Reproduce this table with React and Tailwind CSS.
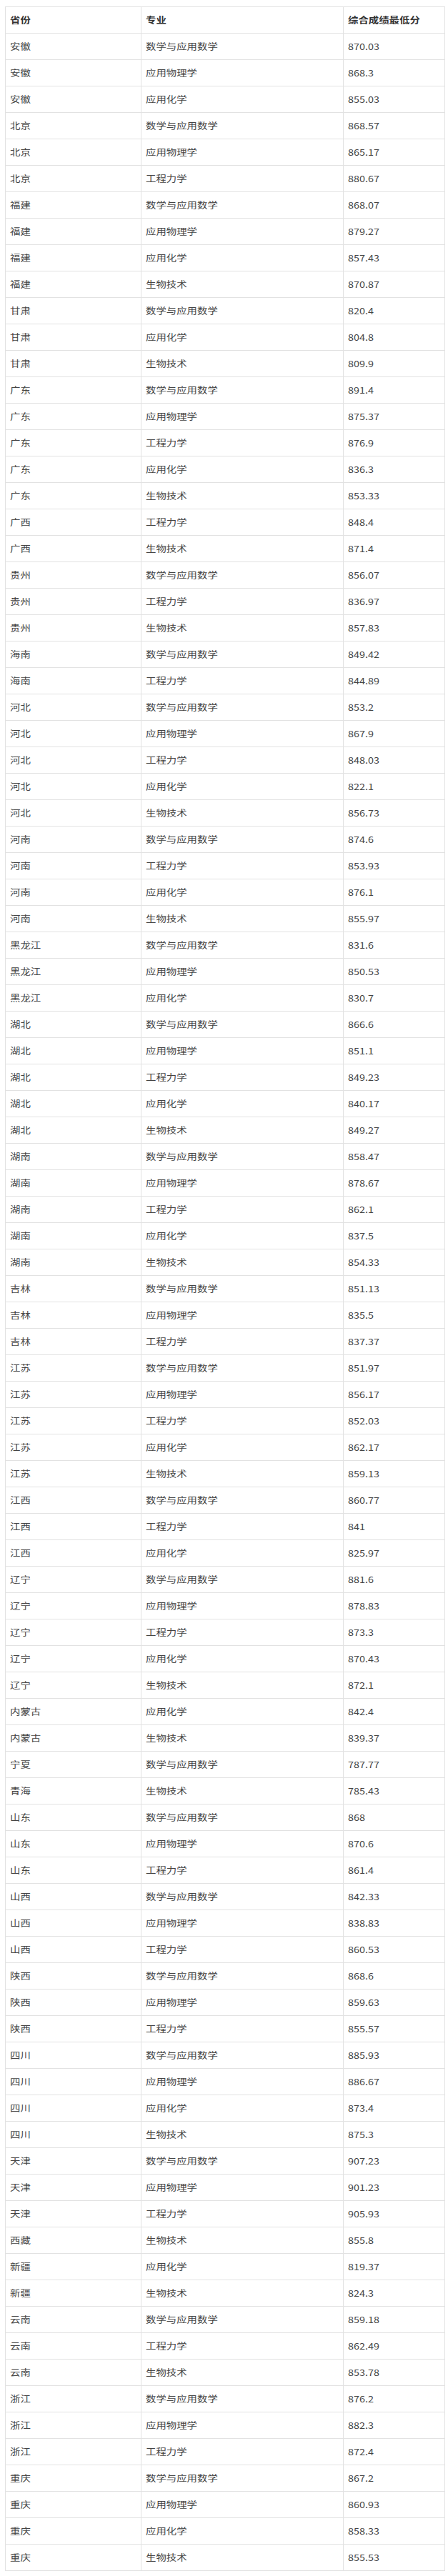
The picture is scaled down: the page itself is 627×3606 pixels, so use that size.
import React from "react";

const raw = `安徽|数学与应用数学|870.03
安徽|应用物理学|868.3
安徽|应用化学|855.03
北京|数学与应用数学|868.57
北京|应用物理学|865.17
北京|工程力学|880.67
福建|数学与应用数学|868.07
福建|应用物理学|879.27
福建|应用化学|857.43
福建|生物技术|870.87
甘肃|数学与应用数学|820.4
甘肃|应用化学|804.8
甘肃|生物技术|809.9
广东|数学与应用数学|891.4
广东|应用物理学|875.37
广东|工程力学|876.9
广东|应用化学|836.3
广东|生物技术|853.33
广西|工程力学|848.4
广西|生物技术|871.4
贵州|数学与应用数学|856.07
贵州|工程力学|836.97
贵州|生物技术|857.83
海南|数学与应用数学|849.42
海南|工程力学|844.89
河北|数学与应用数学|853.2
河北|应用物理学|867.9
河北|工程力学|848.03
河北|应用化学|822.1
河北|生物技术|856.73
河南|数学与应用数学|874.6
河南|工程力学|853.93
河南|应用化学|876.1
河南|生物技术|855.97
黑龙江|数学与应用数学|831.6
黑龙江|应用物理学|850.53
黑龙江|应用化学|830.7
湖北|数学与应用数学|866.6
湖北|应用物理学|851.1
湖北|工程力学|849.23
湖北|应用化学|840.17
湖北|生物技术|849.27
湖南|数学与应用数学|858.47
湖南|应用物理学|878.67
湖南|工程力学|862.1
湖南|应用化学|837.5
湖南|生物技术|854.33
吉林|数学与应用数学|851.13
吉林|应用物理学|835.5
吉林|工程力学|837.37
江苏|数学与应用数学|851.97
江苏|应用物理学|856.17
江苏|工程力学|852.03
江苏|应用化学|862.17
江苏|生物技术|859.13
江西|数学与应用数学|860.77
江西|工程力学|841
江西|应用化学|825.97
辽宁|数学与应用数学|881.6
辽宁|应用物理学|878.83
辽宁|工程力学|873.3
辽宁|应用化学|870.43
辽宁|生物技术|872.1
内蒙古|应用化学|842.4
内蒙古|生物技术|839.37
宁夏|数学与应用数学|787.77
青海|生物技术|785.43
山东|数学与应用数学|868
山东|应用物理学|870.6
山东|工程力学|861.4
山西|数学与应用数学|842.33
山西|应用物理学|838.83
山西|工程力学|860.53
陕西|数学与应用数学|868.6
陕西|应用物理学|859.63
陕西|工程力学|855.57
四川|数学与应用数学|885.93
四川|应用物理学|886.67
四川|应用化学|873.4
四川|生物技术|875.3
天津|数学与应用数学|907.23
天津|应用物理学|901.23
天津|工程力学|905.93
西藏|生物技术|855.8
新疆|应用化学|819.37
新疆|生物技术|824.3
云南|数学与应用数学|859.18
云南|工程力学|862.49
云南|生物技术|853.78
浙江|数学与应用数学|876.2
浙江|应用物理学|882.3
浙江|工程力学|872.4
重庆|数学与应用数学|867.2
重庆|应用物理学|860.93
重庆|应用化学|858.33
重庆|生物技术|855.53`;

const rows = raw.split("\n").map((l) => l.split("|"));

function Cell({ children, bold, last }) {
  return (
    <div
      className={
        "flex items-center px-[6px] border-b border-[#e2e2e2] " +
        (last ? "" : "border-r ") +
        (bold ? "font-bold text-[#333]" : "text-[#444]")
      }
    >
      <span className="inline-block origin-left scale-x-[1.2] whitespace-nowrap">{children}</span>
    </div>
  );
}

export default function App() {
  return (
    <div
      className="w-[627px] bg-white pt-[9px] pl-[7px] pb-[7px] text-[12px]"
      style={{ fontFamily: '"Noto Sans CJK SC", "Noto Sans", sans-serif' }}
    >
      <div className="w-[616px] border-t border-l border-r border-[#e2e2e2]">
        <div className="grid grid-cols-[190px_283px_1fr] h-[37px]">
          <Cell bold>省份</Cell>
          <Cell bold>专业</Cell>
          <Cell bold last>综合成绩最低分</Cell>
        </div>
        {rows.map((r, i) => (
          <div key={i} className="grid grid-cols-[190px_283px_1fr] h-[37px]">
            <Cell>{r[0]}</Cell>
            <Cell>{r[1]}</Cell>
            <Cell last>{r[2]}</Cell>
          </div>
        ))}
      </div>
    </div>
  );
}
